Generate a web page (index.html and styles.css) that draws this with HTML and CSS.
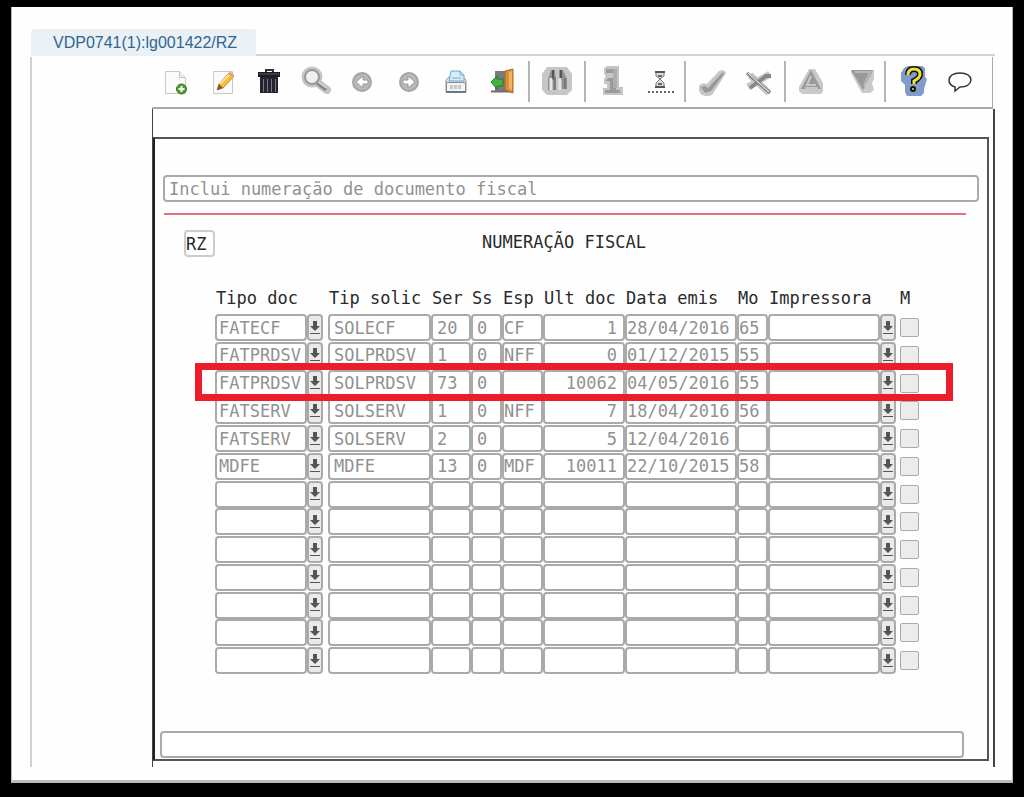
FILE: index.html
```html
<!DOCTYPE html>
<html lang="pt-BR">
<head>
<meta charset="utf-8">
<title>VDP0741(1):lg001422/RZ</title>
<link rel="stylesheet" href="styles.css">
</head>
<body>
<main class="window">
  <div class="tabs"><button class="tab" type="button">VDP0741(1):lg001422/RZ</button><span class="tab-line"></span></div>
  <div class="workspace">
    <nav class="toolbar" aria-label="Ferramentas">
      <div class="group first">
        <button type="button" aria-label="Incluir"><svg viewBox="0 0 32 36"><path d="M5.500 7.500h14l6 6v16h-20z" fill="#fbfbfb" stroke="#c9c9c9"/><path d="M19.500 7.500v6h6" fill="#eee" stroke="#c4c4c4"/><path d="M15 12l6 5" stroke="#e2e2e2"/><circle cx="21.500" cy="25" r="5" fill="#4f9a2f" stroke="#367a1c"/><path d="M21.500 22v6M18.500 25h6" stroke="#fff" stroke-width="2"/></svg></button>
        <button type="button" aria-label="Modificar"><svg viewBox="0 0 32 36"><path d="M6.500 7.500h19v22h-19z" fill="#fafafa" stroke="#c8c8c8"/><path d="M10 26l2-6L22 9q3-1 5 3L16 24z" fill="#f5bd3c" stroke="#c98b2a"/><path d="M13 20L23 10" stroke="#ffe388" stroke-width="2"/><path d="M21 10l5 4 1-2q-2-4-4-4z" fill="#e9a26d"/><path d="M10 26l2-6 4 4z" fill="#7d5633"/></svg></button>
        <button type="button" aria-label="Excluir"><svg viewBox="0 0 32 36"><path d="M12 8V6h7v2" fill="none" stroke="#333" stroke-width="2"/><path d="M4 8h22v5H4z" fill="#1c1c24"/><path d="M5 10h20" stroke="#5b5b68"/><path d="M6 13h18v16H6z" fill="#24242e"/><path d="M9.500 15v13M13.500 15v13M17.500 15v13M21.500 15v13" stroke="#777786"/></svg></button>
        <button type="button" aria-label="Consultar"><svg viewBox="0 0 32 36"><g fill="none" stroke="#c4c4c4" stroke-linecap="round"><circle cx="11" cy="13" r="7" stroke-width="7"/><path d="M18 20l8 6" stroke-width="8"/></g><circle cx="11" cy="13" r="7" fill="#f0f0f0" stroke="#999" stroke-width="2"/><path d="M16 19l9 7" stroke="#888" stroke-width="3"/><path d="M17 18l8 6" stroke="#e5e5e5"/></svg></button>
        <button type="button" aria-label="Anterior"><svg viewBox="0 0 32 36"><circle cx="14" cy="18" r="9" fill="#b9b9b9" stroke="#a4a4a4" stroke-width="2"/><path d="M20 16h-5v-4l-7 6 7 6v-4h5z" fill="#fff" stroke="#999"/></svg></button>
        <button type="button" aria-label="Próximo"><svg viewBox="0 0 32 36"><circle cx="14" cy="18" r="9" fill="#b9b9b9" stroke="#a4a4a4" stroke-width="2"/><path d="M8 16h5v-4l7 6-7 6v-4H8z" fill="#fff" stroke="#999"/></svg></button>
        <button type="button" aria-label="Imprimir"><svg viewBox="0 0 32 36"><path d="M4 16l3-3h14l3 3v12H4z" fill="#e5e5e5" stroke="#8f969d"/><path d="M7 17l2-10h9l4 4v6H7z" fill="#d8edfb" stroke="#6da7cd"/><path d="M18 7v4h4M10 14h9" fill="none" stroke="#79aed0"/><path d="M4.500 18.500h19v9h-19z" fill="#f3f3f3" stroke="#888e94"/><path d="M8 22h12M8 24h12" stroke="#9b9b9b" stroke-dasharray="3 1"/><path d="M4 28h20" stroke="#6d7780" stroke-width="2"/></svg></button>
        <button type="button" aria-label="Sair"><svg viewBox="0 0 32 36"><path d="M6 7h14v20H6z" fill="#777b80"/><path d="M2 27.500h20" stroke="#6d6d6d" stroke-width="2"/><path d="M16 7l8-2v24l-8-3z" fill="#d98d36" stroke="#ae6826"/><path d="M20 8l3-1v19l-3-1z" fill="#f2b466"/><path d="M2 18l6-6v3h6v7H8v3z" fill="#42b43b" stroke="#227c23"/></svg></button>
      </div>
      <div class="group single">
        <button type="button" aria-label="Pesquisar"><svg viewBox="0 0 32 36"><path d="M6 3h20l5 7v16l-5 5H6l-5-5V10z" fill="#c6c6c6"/><path d="M10 6h4l1 20H7V15zM18 6h4l4 9v10h-8z" fill="#919191"/><path d="M12 6v10M20 6v10" stroke="#555" stroke-width="2"/><path d="M10 14v12M19 14v12" stroke="#e5e5e5" stroke-width="3"/><path d="M14 13v13M24 14v11" stroke="#7a7a7a" stroke-width="2"/></svg></button>
      </div>
      <div class="group">
        <button type="button" aria-label="Informação"><svg viewBox="0 0 32 36"><path d="M9 4l3-2h12v21h4v8H8v-7h4v-4H9v-5l2-3-2-2z" fill="#c5c5c5"/><path d="M11 5h9v4h-9zM13 14h8v12h4v3H10v-3h5v-9h-4z" fill="#9a9a9a"/><path d="M20 5v19" stroke="#adadad" stroke-width="4"/></svg></button>
        <button type="button" aria-label="Aguardar"><svg viewBox="0 0 32 36"><path d="M11 8h10M11 23h10" stroke="#555" stroke-width="2"/><path d="M12 9v3l4 3 4-3V9M12 22v-3l4-4 4 4v3" fill="#ddd" stroke="#777"/><path d="M14 12h4M14 20h4" stroke="#666" stroke-width="2"/><path d="M4 28h26" stroke="#666" stroke-width="2" stroke-dasharray="2 2"/></svg></button>
      </div>
      <div class="group">
        <button type="button" aria-label="Confirmar"><svg viewBox="0 0 32 36"><path d="M4 22q3-4 8-2L24 7q6-2 7 2L19 28q-2 5-9 4-7-1-6-10z" fill="#c6c6c6"/><path d="M6 23l4-1 3 2L27 9q2-1 2 1L16 27l-6 2z" fill="#999"/></svg></button>
        <button type="button" aria-label="Cancelar"><svg viewBox="0 0 32 36"><path d="M4 23L26 10M6 11l19 18" stroke="#c8c8c8" stroke-width="7"/><path d="M6 24L22 12h5" fill="none" stroke="#888" stroke-width="4"/><path d="M3 9l23 20" stroke="#858585" stroke-width="3"/><path d="M4 9l21 19" stroke="#fff"/></svg></button>
      </div>
      <div class="group">
        <button type="button" aria-label="Acima"><svg viewBox="0 0 32 36"><path d="M14 5h6l8 14v8l-2 3H7l-3-3v-4z" fill="#c9c9c9"/><path d="M16 6L6 25h20z" fill="#999"/><path d="M16 12l-4 9h9M10 24h13" fill="none" stroke="#c7c7c7" stroke-width="2"/></svg></button>
        <button type="button" aria-label="Abaixo"><svg viewBox="0 0 32 36"><path d="M7 6h23v9l-2 4 2 7-4 3h-8L7 9z" fill="#c9c9c9"/><path d="M7 6h22L19 26z" fill="#999"/><path d="M11 8h15l-6 14" fill="none" stroke="#b8b8b8" stroke-width="2"/></svg></button>
      </div>
      <div class="group">
        <button type="button" aria-label="Ajuda"><svg viewBox="0 0 32 36"><path d="M9 4l4-2h14l3 2v9l2 2-3 10v4l-3 3H12l-2-4v-7l-4-4V9z" fill="#7f9ccc"/><path d="M13 11q0-6 6-6 6 0 6 5 0 4-6 7v3" fill="none" stroke="#111" stroke-width="6"/><path d="M13 11q0-6 6-6 6 0 6 5 0 4-6 7v3" fill="none" stroke="#efe33c" stroke-width="3"/><circle cx="18" cy="25" r="2" fill="#efe33c" stroke="#111" stroke-width="2"/></svg></button>
        <button type="button" aria-label="Mensagem"><svg viewBox="0 0 32 36"><path d="M11 23Q5 21 5 16q1-7 11-7t11 7q-1 7-11 7l-5 4z" fill="#fff" stroke="#333" stroke-width="1.500"/></svg></button>
      </div>
    </nav>
    <div class="frame">
      <section class="panel">
        <input class="field message" aria-label="Mensagem" value="Inclui numeração de documento fiscal" readonly>
        <hr class="rule">
        <div class="heading">
          <input class="field company" aria-label="Empresa" value="RZ">
          <h1>NUMERAÇÃO FISCAL</h1>
        </div>
        <div class="grid">
          <table>
            <colgroup><col class="c-tipo"><col class="c-drop"><col class="c-solic"><col class="c-ser"><col class="c-ss"><col class="c-esp"><col class="c-ult"><col class="c-data"><col class="c-mo"><col><col class="c-drop"><col class="c-m"></colgroup>
            <thead><tr><th colspan="2">Tipo doc</th><th>Tip solic</th><th>Ser</th><th>Ss</th><th>Esp</th><th>Ult doc</th><th>Data emis</th><th>Mo</th><th colspan="2">Impressora</th><th>M</th></tr></thead>
            <tbody id="rows"></tbody>
          </table>
          <div class="highlight"></div>
        </div>
        <input class="field status" aria-label="Situação">
      </section>
    </div>
  </div>
</main>
<script src="rows.js"></script>
</body>
</html>
```
FILE: rows.js
```js
const records = [
  ["FATECF", "SOLECF", "20", "0", "CF", "1", "28/04/2016", "65"],
  ["FATPRDSV", "SOLPRDSV", "1", "0", "NFF", "0", "01/12/2015", "55"],
  ["FATPRDSV", "SOLPRDSV", "73", "0", "", "10062", "04/05/2016", "55"],
  ["FATSERV", "SOLSERV", "1", "0", "NFF", "7", "18/04/2016", "56"],
  ["FATSERV", "SOLSERV", "2", "0", "", "5", "12/04/2016", ""],
  ["MDFE", "MDFE", "13", "0", "MDF", "10011", "22/10/2015", "58"]
];
const names = ["Tipo doc", "Tip solic", "Ser", "Ss", "Esp", "Ult doc", "Data emis", "Mo", "Impressora"];
const kinds = ["tipo", "roomy", "roomy", "roomy", "tight", "number", "tight", "tight", "tight"];
const drop = label => `<td><button class="drop" type="button" aria-label="${label}"><svg viewBox="0 0 12 16"><path d="M4 1h4v5h3l-5 5-5-5h3z"/><path d="M1 13h10v1H1z"/></svg></button></td>`;
let html = "";
for (let r = 0; r < 13; r++) {
  const values = records[r] || [];
  html += "<tr>";
  names.forEach((name, i) => {
    html += `<td class="${i === 1 ? "spaced" : ""}"><input class="field ${kinds[i]}" aria-label="${name} ${r + 1}" value="${values[i] || ""}"></td>`;
    if (i === 0 || i === 8) html += drop(`Abrir ${name} ${r + 1}`);
  });
  html += `<td class="mark"><input type="checkbox" aria-label="M ${r + 1}"></td></tr>`;
}
document.getElementById("rows").innerHTML = html;
```
FILE: styles.css
```css
* { box-sizing: border-box; }
body {
  margin: 0;
  min-height: 100vh;
  padding: 7px 11px 14px;
  display: flex;
  background: #000;
  color: #2a2a2a;
  font-family: "DejaVu Sans Mono", monospace;
  font-size: 17px;
}
button, input { font: inherit; margin: 0; }
.window {
  flex: 1;
  min-width: 0;
  display: flex;
  flex-direction: column;
  padding: 22px 17px 13px 18px;
  background: #fefefe;
  border: solid #bbb;
  border-width: 0 1px 3px;
}
.tabs { display: flex; height: 27px; padding-left: 1px; }
.tab {
  border: 0;
  border-radius: 3px 3px 0 0;
  padding: 0 22px;
  width: 225px;
  white-space: nowrap;
  text-align: left;
  background: #e9f1f7;
  color: #33648f;
  font-family: "Liberation Sans", sans-serif;
  font-size: 16px;
}
.tab-line { flex: 1; border-bottom: 2px solid #d2d2d2; }
.workspace {
  flex: 1;
  display: flex;
  flex-direction: column;
  margin-top: 1px;
  padding-left: 120px;
  border-left: 2px solid #d0d0d0;
}
.toolbar {
  display: flex;
  height: 52px;
  margin-right: 2px;
  border-bottom: 2px solid #aaa;
  border-right: 1px solid #aaa;
}
.group {
  display: flex;
  margin: 4px 0 5px;
  border-left: 2px solid #b4b4b4;
}
.group.first { border-left: 0; }
.group button {
  width: 49px;
  padding: 0;
  border: 0;
  background: none;
  display: grid;
  place-items: center;
}
.group.first button { width: 47px; }
.group.single button { width: 54px; }
.group svg { width: 32px; height: 36px; }
.frame {
  flex: 1;
  display: flex;
  padding: 28px 4px 6px 0;
  border: solid #444;
  border-width: 0 2px 0 1px;
}
.panel {
  flex: 1;
  min-width: 0;
  display: flex;
  flex-direction: column;
  border: 2px solid #555;
  border-left-color: #222;
}
.field {
  display: block;
  width: 100%;
  height: 27px;
  padding: 0 2px;
  border: 2px solid #aaa;
  border-radius: 4px;
  background: #fff;
  color: #919191;
  outline: 0;
}
.message {
  width: auto;
  margin: 36px 8px 0;
  padding: 0 4px;
}
.rule {
  margin: 11px 21px 0 9px;
  border: 0;
  border-top: 2px solid #e5707b;
}
.heading {
  display: grid;
  grid-template-columns: 31px 1fr;
  margin: 15px 38px 0 29px;
}
.company { padding: 0; color: #2a2a2a; border-color: #ccc; }
.heading h1 {
  margin: 0;
  padding-right: 36px;
  text-align: center;
  font-size: 17px;
  line-height: 24px;
  font-weight: 400;
}
.grid { position: relative; margin: 29px 68px 0 60px; }
table {
  width: 100%;
  height: 389px;
  table-layout: fixed;
  border-collapse: collapse;
}
thead tr { height: 28px; }
th {
  padding: 0 0 0 1px;
  text-align: left;
  white-space: nowrap;
  font-weight: 400;
  line-height: 24px;
  vertical-align: top;
}
th:nth-child(2) { padding-left: 6px; }
td { padding: 0; vertical-align: top; }
.c-tipo { width: 92px; }
.c-drop { width: 16px; }
.c-solic { width: 108px; }
.c-ser { width: 40px; }
.c-ss { width: 31px; }
.c-esp { width: 41px; }
.c-ult { width: 82px; }
.c-data { width: 112px; }
.c-mo { width: 31px; }
.c-m { width: 23px; }
.spaced { padding-left: 5px; }
.roomy { padding: 0 0 0 4px; }
.number { padding-right: 6px; text-align: right; }
.tipo, .tight { padding: 0; }
.tipo { padding-left: 2px; }
.drop {
  display: grid;
  place-items: center;
  width: 16px;
  height: 27px;
  padding: 0;
  border: 2px solid #aaa;
  border-radius: 4px;
  background: #eaeaea;
}
.drop svg { width: 12px; height: 16px; fill: #555; }
.mark { padding: 4px 0 0 4px; }
th:last-child { padding-left: 4px; }
.mark input {
  appearance: none;
  display: block;
  width: 19px;
  height: 19px;
  border: 1px solid #aaa;
  border-radius: 2px;
  background: #ececec;
}
.highlight {
  position: absolute;
  top: 77px;
  left: -20px;
  right: -34px;
  height: 38px;
  border: 7px solid #ed1c2b;
  pointer-events: none;
}
.status { width: auto; margin: auto 23px 1px 5px; }
```
